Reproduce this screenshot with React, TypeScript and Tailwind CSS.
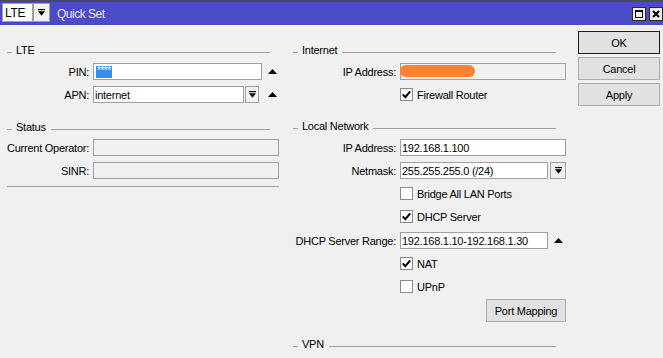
import React from "react";

const DropIcon = () => (
  <svg width="7" height="7" viewBox="0 0 7 7">
    <rect x="0" y="0" width="7" height="1.2" fill="#000" />
    <polygon points="0,2.2 7,2.2 3.5,6.8" fill="#000" />
  </svg>
);

const UpTri = ({ className = "" }: { className?: string }) => (
  <svg className={className} width="9" height="5" viewBox="0 0 9 5">
    <polygon points="0,5 9,5 4.5,0" fill="#000" />
  </svg>
);

function Header({ title }: { title: string }) {
  return (
    <div className="flex h-[14px] w-[263px] items-start">
      <div className="mt-[9px] h-px w-[5px] bg-[#a0a0a0]" />
      <span className="ml-[4px] leading-[14px]">{title}</span>
      <div className="ml-[5px] mt-[9px] h-px flex-1 bg-[#a0a0a0]" />
    </div>
  );
}

function Input({
  w,
  value,
  disabled,
  children,
}: {
  w: string;
  value?: string;
  disabled?: boolean;
  children?: React.ReactNode;
}) {
  return (
    <div
      className={`relative flex h-[17px] items-center border border-[#a0a0a0] pl-[1px] ${
        disabled ? "bg-[#f0f0f0]" : "bg-white"
      } ${w}`}
    >
      {value}
      {children}
    </div>
  );
}

function DropBtn({ w }: { w: string }) {
  return (
    <div className={`flex h-[17px] items-center justify-center border border-[#a0a0a0] bg-[#f0f0f0] ${w}`}>
      <DropIcon />
    </div>
  );
}

function Check({ checked, label }: { checked: boolean; label: string }) {
  return (
    <div className="flex h-[23px] items-center pl-[107px]">
      <div className="flex h-[13px] w-[13px] items-center justify-center border border-[#8a8a8a] bg-white">
        {checked && (
          <svg width="11" height="11" viewBox="0 0 11 11">
            <polyline points="1.8,5.4 4.3,8.2 9.2,2.4" fill="none" stroke="#000" strokeWidth="2" />
          </svg>
        )}
      </div>
      <span className="ml-[4px]">{label}</span>
    </div>
  );
}

function LRow({ label, children }: { label: string; children: React.ReactNode }) {
  return (
    <div className="flex h-[23px] items-center">
      <div className="w-[82px] text-right whitespace-nowrap">{label}</div>
      <div className="ml-[4px] flex items-center">{children}</div>
    </div>
  );
}

function RRow({ label, children }: { label: string; children: React.ReactNode }) {
  return (
    <div className="flex h-[23px] items-center">
      <div className="w-[103px] text-right whitespace-nowrap">{label}</div>
      <div className="ml-[4px] flex items-center">{children}</div>
    </div>
  );
}

function Btn({ label, def }: { label: string; def?: boolean }) {
  return (
    <div
      className={`flex h-[23px] w-[82px] items-center justify-center border bg-[#e1e1e1] ${
        def ? "border-[#1a1a1a]" : "border-[#adadad]"
      }`}
    >
      {label}
    </div>
  );
}

export default function App() {
  return (
    <div className="h-[358px] w-[663px] overflow-hidden bg-[#f0f0f0] text-[11px] leading-[14px] tracking-[-0.25px] text-black [font-family:'Liberation_Sans',Arial,sans-serif]">
      <div className="h-[2px] bg-[#4a4a58]" />
      <div className="flex h-[23px] items-start bg-[#4b4bc6]">
        <div className="ml-[2px] mt-[1px] flex">
          <div className="flex h-[19px] w-[31px] items-center border border-[#a0a0a0] bg-white pl-[2px] text-[12px] tracking-[-0.3px]">
            LTE
          </div>
          <div className="flex h-[19px] w-[17px] items-center justify-center border border-[#a0a0a0] bg-[#f0f0f0]">
            <DropIcon />
          </div>
        </div>
        <div className="ml-[7px] mt-[5px] text-[12px] tracking-[-0.5px] text-[#e4e4f8]">Quick Set</div>
        <div className="ml-auto mt-[5px] flex gap-[3px]">
          <div className="flex h-[14px] w-[14px] items-center justify-center border border-[#2a2a2a] bg-[#ececec]">
            <svg width="8" height="8" viewBox="0 0 8 8">
              <rect x="0.5" y="0.5" width="7" height="7" fill="none" stroke="#000" strokeWidth="1" />
              <rect x="0" y="0" width="8" height="2" fill="#000" />
            </svg>
          </div>
          <div className="flex h-[14px] w-[14px] items-center justify-center border border-[#2a2a2a] bg-[#ececec]">
            <svg width="8" height="8" viewBox="0 0 8 8">
              <path d="M1 1 L7 7 M7 1 L1 7" stroke="#000" strokeWidth="2" />
            </svg>
          </div>
        </div>
      </div>

      <div className="flex">
        {/* Left column */}
        <div className="w-[279px] pl-[7px] pt-[18px]">
          <Header title="LTE" />
          <div className="mt-[3px]">
            <LRow label="PIN:">
              <Input w="w-[169px]">
                <span className="ml-[1px] inline-block h-[12px] overflow-hidden bg-[#3390f0] px-[1px] text-[10px] leading-[10px] tracking-[-0.5px] text-white">
                  ****
                </span>
              </Input>
              <UpTri className="ml-[6px]" />
            </LRow>
            <LRow label="APN:">
              <Input w="w-[151px]" value="internet" />
              <div className="ml-[1px]">
                <DropBtn w="w-[14px]" />
              </div>
              <UpTri className="ml-[9px]" />
            </LRow>
          </div>
          <div className="mt-[14px]">
            <Header title="Status" />
          </div>
          <div className="mt-[2px]">
            <LRow label="Current Operator:">
              <Input w="w-[186px]" disabled />
            </LRow>
            <LRow label="SINR:">
              <Input w="w-[186px]" disabled />
            </LRow>
          </div>
          <div className="mt-[4px] h-px w-[272px] bg-[#a0a0a0]" />
        </div>

        {/* Right column */}
        <div className="ml-[14px] w-[273px] pt-[18px]">
          <Header title="Internet" />
          <div className="mt-[3px]">
            <RRow label="IP Address:">
              <Input w="w-[166px]" disabled>
                <div className="absolute left-[-1px] top-[1px] h-[12px] w-[75px] rounded-[6px] bg-[#f98233]" />
              </Input>
            </RRow>
            <Check checked label="Firewall Router" />
          </div>
          <div className="mt-[13px]">
            <Header title="Local Network" />
          </div>
          <div className="mt-[3px]">
            <RRow label="IP Address:">
              <Input w="w-[166px]" value="192.168.1.100" />
            </RRow>
            <RRow label="Netmask:">
              <Input w="w-[148px]" value="255.255.255.0 (/24)" />
              <div className="ml-[2px]">
                <DropBtn w="w-[16px]" />
              </div>
            </RRow>
            <Check checked={false} label="Bridge All LAN Ports" />
            <Check checked label="DHCP Server" />
            <div className="mt-[1px]">
              <RRow label="DHCP Server Range:">
                <Input w="w-[148px]" value="192.168.1.10-192.168.1.30" />
                <UpTri className="ml-[6px]" />
              </RRow>
            </div>
            <Check checked label="NAT" />
            <Check checked={false} label="UPnP" />
            <div className="mt-[1px] flex justify-end">
              <div className="flex h-[23px] w-[80px] items-center justify-center border border-[#adadad] bg-[#e1e1e1]">
                Port Mapping
              </div>
            </div>
          </div>
          <div className="mt-[15px]">
            <Header title="VPN" />
          </div>
        </div>

        {/* Buttons */}
        <div className="ml-[12px] flex flex-col gap-[3px] pt-[6px]">
          <Btn label="OK" def />
          <Btn label="Cancel" />
          <Btn label="Apply" />
        </div>
      </div>
    </div>
  );
}
